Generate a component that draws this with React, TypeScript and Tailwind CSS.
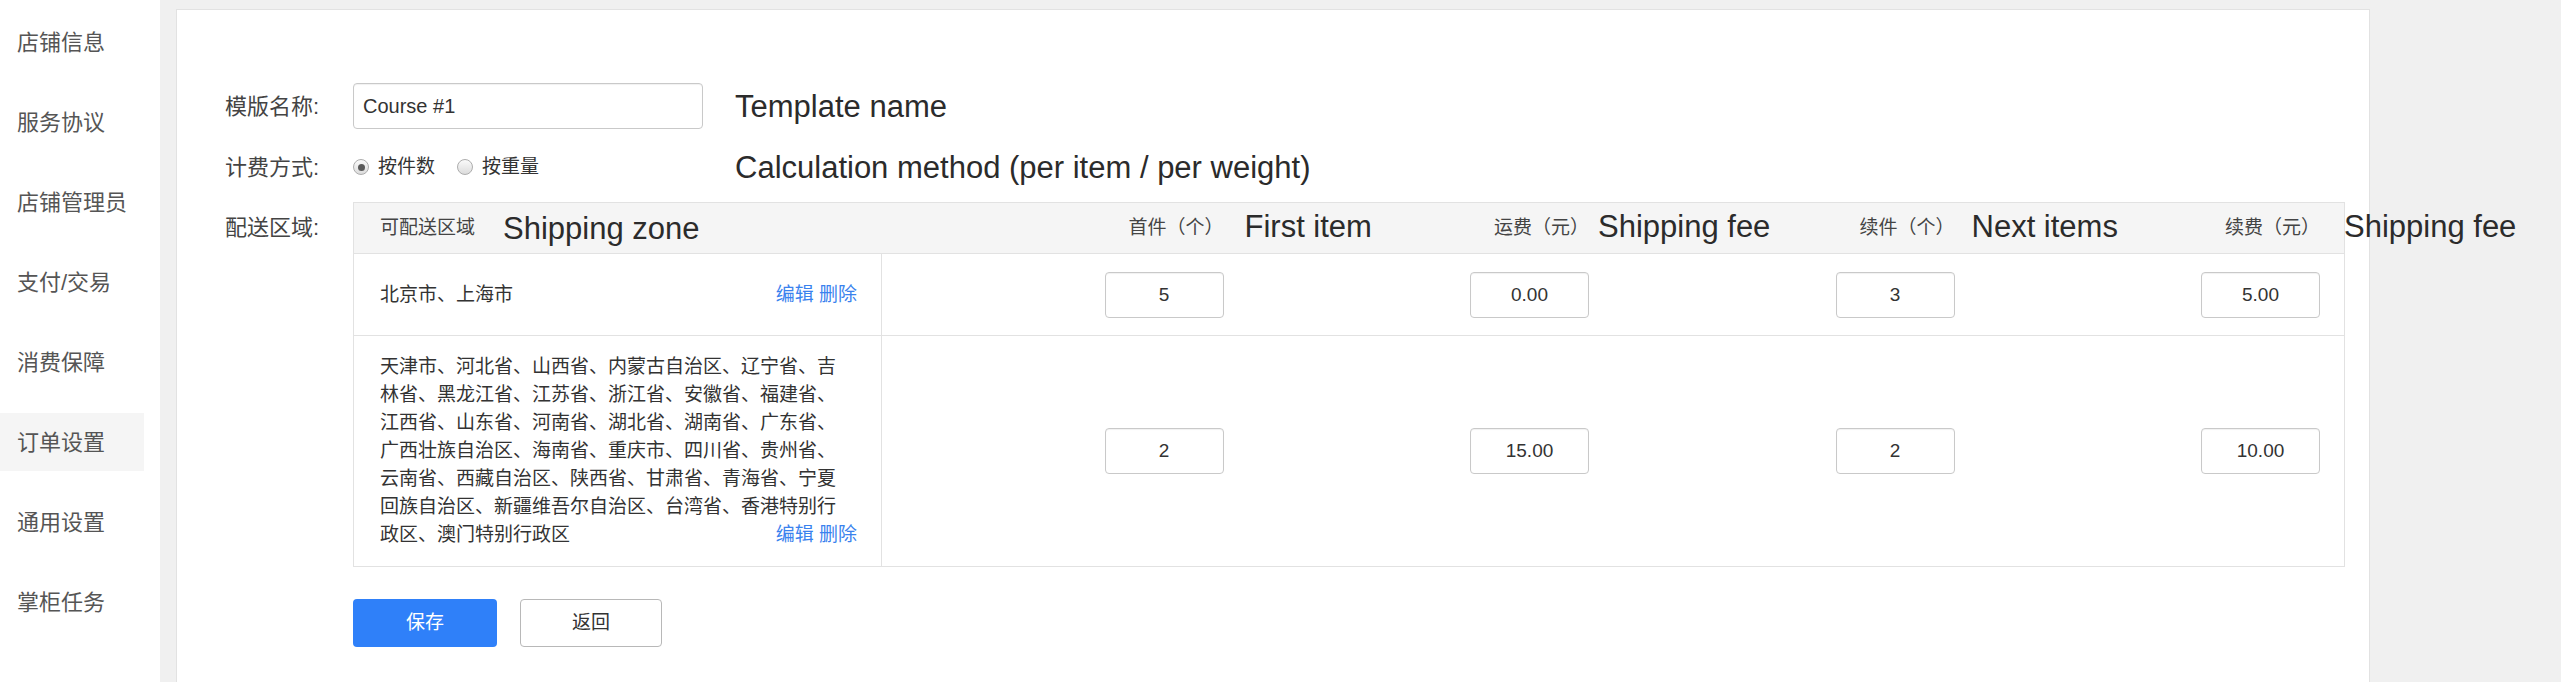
import * as React from "react";

const navItems = [
  "店铺信息",
  "服务协议",
  "店铺管理员",
  "支付/交易",
  "消费保障",
  "订单设置",
  "通用设置",
  "掌柜任务",
];

const activeNav = "订单设置";

const columns = [
  { label: "首件（个）", note: "First item", gap: "ml-[21px]" },
  { label: "运费（元）", note: "Shipping fee", gap: "ml-[9px]" },
  { label: "续件（个）", note: "Next items", gap: "ml-[17px]" },
  { label: "续费（元）", note: "Shipping fee", gap: "ml-[24px]" },
];

const zones = [
  {
    regions: "北京市、上海市",
    values: ["5", "0.00", "3", "5.00"],
  },
  {
    regions:
      "天津市、河北省、山西省、内蒙古自治区、辽宁省、吉林省、黑龙江省、江苏省、浙江省、安徽省、福建省、江西省、山东省、河南省、湖北省、湖南省、广东省、广西壮族自治区、海南省、重庆市、四川省、贵州省、云南省、西藏自治区、陕西省、甘肃省、青海省、宁夏回族自治区、新疆维吾尔自治区、台湾省、香港特别行政区、澳门特别行政区",
    values: ["2", "15.00", "2", "10.00"],
  },
];

function Note({ children, className = "" }: { children: React.ReactNode; className?: string }) {
  return (
    <span className={`whitespace-nowrap text-[31px] leading-none text-[#2b2b2b] ${className}`}>
      {children}
    </span>
  );
}

function Radio({ checked, label }: { checked?: boolean; label: string }) {
  return (
    <label className="flex items-center gap-[9px]">
      <span className="flex size-[16px] items-center justify-center rounded-full border border-[#adadad] bg-gradient-to-b from-[#fafafa] to-[#dcdcdc]">
        {checked && <span className="size-[7px] rounded-full bg-[#5a5a5a]" />}
      </span>
      <span className="text-[19px] leading-[28px] text-[#333]">{label}</span>
    </label>
  );
}

function NumberBox({ value }: { value: string }) {
  return (
    <input
      className="h-[46px] w-[119px] rounded-[4px] border border-[#c9c9c9] bg-white text-center text-[19px] text-[#333] shadow-[inset_0_1px_1px_rgba(0,0,0,0.06)] outline-none"
      defaultValue={value}
      readOnly
    />
  );
}

export default function App() {
  return (
    <div className="flex h-[682px] overflow-hidden bg-[#f0f0f0] font-['Liberation_Sans','Noto_Sans_CJK_SC',sans-serif]">
      <nav className="flex w-[160px] shrink-0 flex-col gap-[22px] bg-white pt-[13px]">
        {navItems.map((item) => (
          <div
            className={`flex h-[58px] w-[144px] shrink-0 items-center pl-[17px] text-[22px] text-[#555] ${
              item === activeNav ? "bg-[#f5f5f5]" : ""
            }`}
            key={item}
          >
            {item}
          </div>
        ))}
      </nav>

      <main className="mt-[9px] ml-[16px] min-h-[700px] w-[2194px] shrink-0 border border-[#e2e2e2] bg-white pt-[73px] pr-[24px] pl-[48px]">
        {/* 模版名称 */}
        <div className="flex h-[46px] items-center">
          <span className="w-[128px] shrink-0 text-[22px] text-[#444]">模版名称:</span>
          <input
            className="h-[46px] w-[350px] rounded-[4px] border border-[#c9c9c9] bg-white px-[9px] text-[20px] text-[#333] shadow-[inset_0_1px_1px_rgba(0,0,0,0.06)] outline-none"
            defaultValue="Course #1"
            readOnly
          />
          <Note className="ml-[32px]">Template name</Note>
        </div>

        {/* 计费方式 */}
        <div className="mt-[15px] flex h-[46px] items-center">
          <span className="w-[128px] shrink-0 text-[22px] text-[#444]">计费方式:</span>
          <div className="flex w-[350px] items-center gap-[22px]">
            <Radio checked label="按件数" />
            <Radio label="按重量" />
          </div>
          <Note className="ml-[32px]">Calculation method (per item / per weight)</Note>
        </div>

        {/* 配送区域 */}
        <div className="mt-[12px] flex">
          <span className="flex h-[51px] w-[128px] shrink-0 items-center text-[22px] text-[#444]">
            配送区域:
          </span>
          <div className="flex-1 border border-[#e2e2e2] text-[19px] text-[#333]">
            <div className="grid h-[51px] grid-cols-[528px_1fr_1fr_1fr_1fr] border-b border-[#e2e2e2] bg-[#f5f5f5] text-[#444]">
              <div className="flex items-center pl-[26px]">
                可配送区域
                <Note className="ml-[28px]">Shipping zone</Note>
              </div>
              {columns.map((col, i) => (
                <div className="flex items-center justify-end pr-[24px]" key={i}>
                  <span className="relative">
                    {col.label}
                    <span className={`absolute top-1/2 left-full -translate-y-1/2 ${col.gap}`}>
                      <Note>{col.note}</Note>
                    </span>
                  </span>
                </div>
              ))}
            </div>

            {zones.map((zone, i) => (
              <div
                className={`grid min-h-[82px] grid-cols-[528px_1fr_1fr_1fr_1fr] ${
                  i < zones.length - 1 ? "border-b border-[#e2e2e2]" : ""
                }`}
                key={i}
              >
                <div className="flex flex-col justify-center border-r border-[#e2e2e2] py-[17px] pr-[24px] pl-[26px] leading-[28px]">
                  <p className="w-[462px]">{zone.regions}</p>
                  <span className="-mt-[28px] self-end whitespace-nowrap text-[#3a82ee]">
                    编辑 删除
                  </span>
                </div>
                {zone.values.map((v, j) => (
                  <div className="flex items-center justify-end pr-[24px]" key={j}>
                    <NumberBox value={v} />
                  </div>
                ))}
              </div>
            ))}
          </div>
        </div>

        <div className="mt-[32px] flex gap-[23px] pl-[128px]">
          <button className="h-[48px] w-[144px] rounded-[4px] bg-[#2f80f9] text-[19px] text-white">
            保存
          </button>
          <button className="h-[48px] w-[142px] rounded-[4px] border border-[#b8b8b8] bg-white text-[19px] text-[#333]">
            返回
          </button>
        </div>
      </main>
    </div>
  );
}
